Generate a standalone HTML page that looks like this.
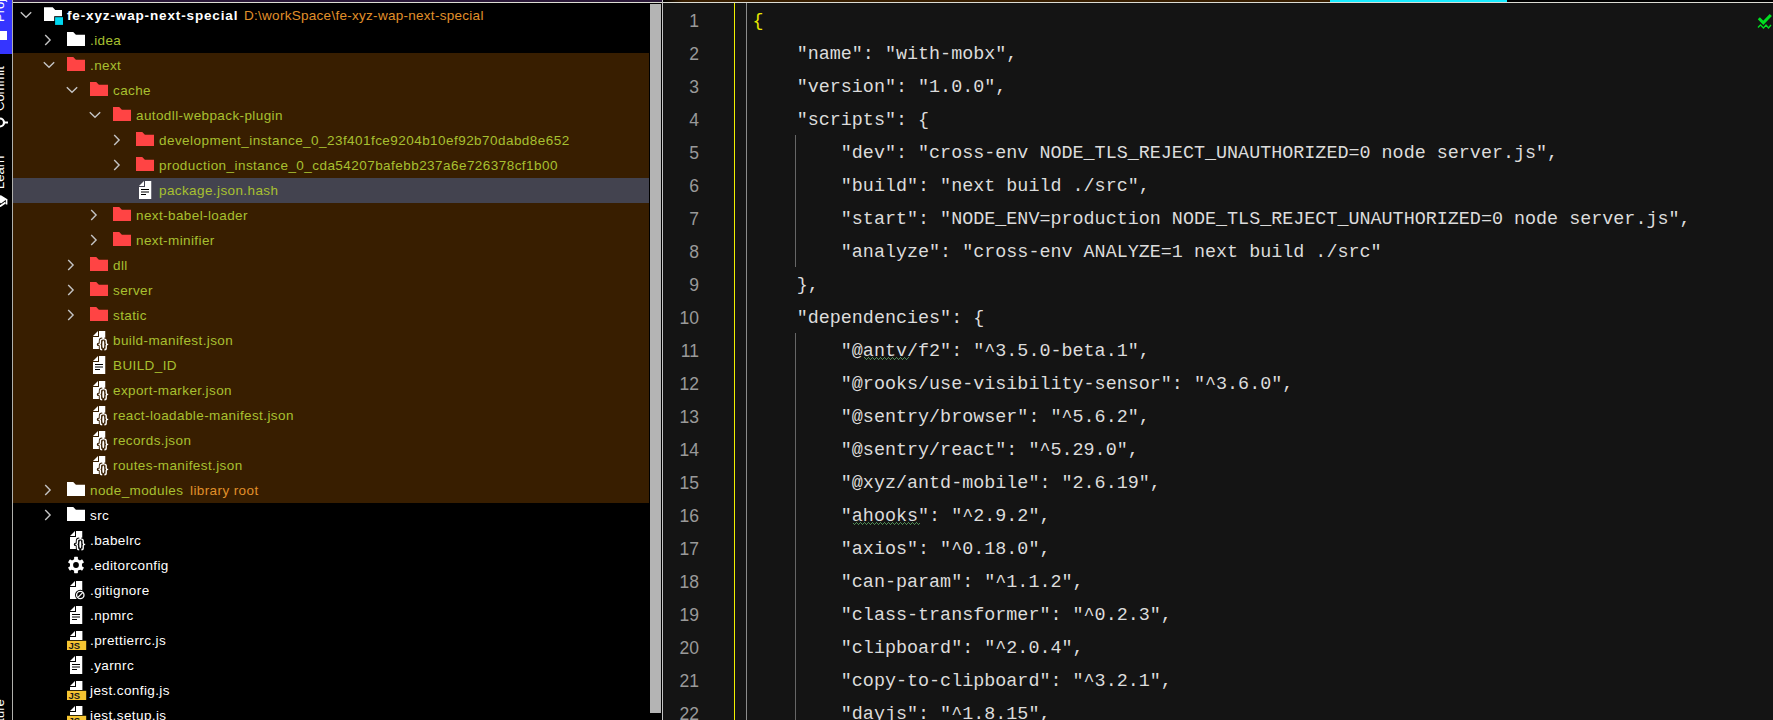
<!DOCTYPE html>
<html><head><meta charset="utf-8"><style>
*{margin:0;padding:0;box-sizing:border-box}
html,body{width:1773px;height:720px;overflow:hidden;background:#000}
body{position:relative;font-family:"Liberation Sans",sans-serif}
.abs{position:absolute}
.ic{position:absolute;display:block;overflow:visible}
.t{position:absolute;font-size:13.5px;line-height:25px;white-space:pre;letter-spacing:0.4px}
.b{font-weight:bold;letter-spacing:0.86px}
.ln{position:absolute;right:1074px;font-family:"Liberation Sans",sans-serif;font-size:17.5px;line-height:32px;color:#9a9a9a;white-space:pre}
.cl{position:absolute;left:752.5px;font-family:"Liberation Mono",monospace;font-size:18.4px;line-height:33px;color:#dcdcdc;white-space:pre}
.vt{position:absolute;font-size:13px;line-height:13px;color:#fff;white-space:pre;transform-origin:0 0;transform:rotate(-90deg)}
</style></head><body>

<div class="abs" style="left:0;top:0;width:12px;height:54px;background:#3535ff"></div>
<div class="vt" style="left:-7.5px;top:22px">Project</div>
<svg class="ic" style="left:0;top:30px" width="12" height="12"><rect x="-4" y="1" width="11" height="9" fill="#fff"/></svg>
<div class="vt" style="left:-7.5px;top:111px">Commit</div>
<svg class="ic" style="left:0;top:114px" width="12" height="16"><circle cx="0" cy="8.5" r="4" fill="none" stroke="#fff" stroke-width="2.2"/><path d="M4 8.5H8" stroke="#fff" stroke-width="2"/></svg>
<div class="vt" style="left:-7.5px;top:189px">Learn</div>
<svg class="ic" style="left:0;top:194px" width="12" height="14"><path d="M-5 5.5L0.5 1L7 5L1 9.5Z" fill="#fff"/><path d="M-4 10.5L0.5 12L5.5 8.5" fill="none" stroke="#fff" stroke-width="1.8"/><path d="M6.6 5V10.5" stroke="#fff" stroke-width="1.6"/></svg>
<div class="vt" style="left:-7.5px;top:752px">Structure</div>

<div class="abs" style="left:12px;top:0;width:1px;height:720px;background:#b0b0ac"></div>
<div class="abs" style="left:13px;top:0;width:649px;height:2px;background:#2a1838"></div>
<div class="abs" style="left:663px;top:0;width:1110px;height:2px;background:linear-gradient(90deg,#000 0px,#381e00 20px,#381e00 667px,#18ecff 667px,#18ecff 844px,#000 844px)"></div>
<div class="abs" style="left:13px;top:2px;width:1760px;height:1px;background:#dcdcd4"></div>
<div class="abs" style="left:13px;top:53px;width:636px;height:450px;background:#381e00"></div>
<div class="abs" style="left:13px;top:178px;width:636px;height:25px;background:#43434f"></div>
<svg class="ic" style="left:19.8px;top:11px" width="12" height="8" viewBox="0 0 12 8"><path d="M0.8 1.2 L6 6.2 L11.2 1.2" fill="none" stroke="#c4c4c4" stroke-width="1.4"/></svg><svg class="ic" style="left:44px;top:7px" width="20" height="18" viewBox="0 0 20 18"><path d="M0 0.3H8.7L11.2 3H18V14H0Z" fill="#fff"/><rect x="10.2" y="9.2" width="9.6" height="8.8" fill="#000"/><rect x="11.1" y="10.2" width="7.9" height="7.7" fill="#00d8f0"/></svg><span class="t b" style="left:67px;top:3px;color:#fff">fe-xyz-wap-next-special</span><span class="t" style="left:244px;top:3px;color:#e0902a;letter-spacing:0.28px">D:\workSpace\fe-xyz-wap-next-special</span><svg class="ic" style="left:44.099999999999994px;top:34px" width="8" height="12" viewBox="0 0 8 12"><path d="M1.2 1.1 L6.1 6 L1.2 10.9" fill="none" stroke="#c4c4c4" stroke-width="1.4"/></svg><svg class="ic" style="left:67px;top:32px" width="18" height="14" viewBox="0 0 18 14"><path d="M0 0H6.2L8.9 2.7H18V14H0Z" fill="#ffffff"/></svg><span class="t" style="left:90px;top:28px;color:#a8c030">.idea</span><svg class="ic" style="left:42.8px;top:61px" width="12" height="8" viewBox="0 0 12 8"><path d="M0.8 1.2 L6 6.2 L11.2 1.2" fill="none" stroke="#c4c4c4" stroke-width="1.4"/></svg><svg class="ic" style="left:67px;top:57px" width="18" height="14" viewBox="0 0 18 14"><path d="M0 0H6.2L8.9 2.7H18V14H0Z" fill="#ff4444"/></svg><span class="t" style="left:90px;top:53px;color:#a8c030">.next</span><svg class="ic" style="left:65.8px;top:86px" width="12" height="8" viewBox="0 0 12 8"><path d="M0.8 1.2 L6 6.2 L11.2 1.2" fill="none" stroke="#c4c4c4" stroke-width="1.4"/></svg><svg class="ic" style="left:90px;top:82px" width="18" height="14" viewBox="0 0 18 14"><path d="M0 0H6.2L8.9 2.7H18V14H0Z" fill="#ff4444"/></svg><span class="t" style="left:113px;top:78px;color:#a8c030">cache</span><svg class="ic" style="left:88.8px;top:111px" width="12" height="8" viewBox="0 0 12 8"><path d="M0.8 1.2 L6 6.2 L11.2 1.2" fill="none" stroke="#c4c4c4" stroke-width="1.4"/></svg><svg class="ic" style="left:113px;top:107px" width="18" height="14" viewBox="0 0 18 14"><path d="M0 0H6.2L8.9 2.7H18V14H0Z" fill="#ff4444"/></svg><span class="t" style="left:136px;top:103px;color:#a8c030">autodll-webpack-plugin</span><svg class="ic" style="left:113.1px;top:134px" width="8" height="12" viewBox="0 0 8 12"><path d="M1.2 1.1 L6.1 6 L1.2 10.9" fill="none" stroke="#c4c4c4" stroke-width="1.4"/></svg><svg class="ic" style="left:136px;top:132px" width="18" height="14" viewBox="0 0 18 14"><path d="M0 0H6.2L8.9 2.7H18V14H0Z" fill="#ff4444"/></svg><span class="t" style="left:159px;top:128px;color:#a8c030;letter-spacing:0.45px">development_instance_0_23f401fce9204b10ef92b70dabd8e652</span><svg class="ic" style="left:113.1px;top:159px" width="8" height="12" viewBox="0 0 8 12"><path d="M1.2 1.1 L6.1 6 L1.2 10.9" fill="none" stroke="#c4c4c4" stroke-width="1.4"/></svg><svg class="ic" style="left:136px;top:157px" width="18" height="14" viewBox="0 0 18 14"><path d="M0 0H6.2L8.9 2.7H18V14H0Z" fill="#ff4444"/></svg><span class="t" style="left:159px;top:153px;color:#a8c030;letter-spacing:0.45px">production_instance_0_cda54207bafebb237a6e726378cf1b00</span><svg class="ic" style="left:136px;top:178px" width="24" height="25" viewBox="0 0 24 25"><path d="M3 8L8 3V8Z" fill="#fff"/><path d="M9 3H15.25V21H3V9H9Z" fill="#fff"/><rect x="5" y="11" width="8" height="1" fill="#000"/><rect x="5" y="13.5" width="8" height="1" fill="#000"/><rect x="5" y="16" width="5" height="1" fill="#000"/></svg><span class="t" style="left:159px;top:178px;color:#a8c030">package.json.hash</span><svg class="ic" style="left:90.1px;top:209px" width="8" height="12" viewBox="0 0 8 12"><path d="M1.2 1.1 L6.1 6 L1.2 10.9" fill="none" stroke="#c4c4c4" stroke-width="1.4"/></svg><svg class="ic" style="left:113px;top:207px" width="18" height="14" viewBox="0 0 18 14"><path d="M0 0H6.2L8.9 2.7H18V14H0Z" fill="#ff4444"/></svg><span class="t" style="left:136px;top:203px;color:#a8c030">next-babel-loader</span><svg class="ic" style="left:90.1px;top:234px" width="8" height="12" viewBox="0 0 8 12"><path d="M1.2 1.1 L6.1 6 L1.2 10.9" fill="none" stroke="#c4c4c4" stroke-width="1.4"/></svg><svg class="ic" style="left:113px;top:232px" width="18" height="14" viewBox="0 0 18 14"><path d="M0 0H6.2L8.9 2.7H18V14H0Z" fill="#ff4444"/></svg><span class="t" style="left:136px;top:228px;color:#a8c030">next-minifier</span><svg class="ic" style="left:67.1px;top:259px" width="8" height="12" viewBox="0 0 8 12"><path d="M1.2 1.1 L6.1 6 L1.2 10.9" fill="none" stroke="#c4c4c4" stroke-width="1.4"/></svg><svg class="ic" style="left:90px;top:257px" width="18" height="14" viewBox="0 0 18 14"><path d="M0 0H6.2L8.9 2.7H18V14H0Z" fill="#ff4444"/></svg><span class="t" style="left:113px;top:253px;color:#a8c030">dll</span><svg class="ic" style="left:67.1px;top:284px" width="8" height="12" viewBox="0 0 8 12"><path d="M1.2 1.1 L6.1 6 L1.2 10.9" fill="none" stroke="#c4c4c4" stroke-width="1.4"/></svg><svg class="ic" style="left:90px;top:282px" width="18" height="14" viewBox="0 0 18 14"><path d="M0 0H6.2L8.9 2.7H18V14H0Z" fill="#ff4444"/></svg><span class="t" style="left:113px;top:278px;color:#a8c030">server</span><svg class="ic" style="left:67.1px;top:309px" width="8" height="12" viewBox="0 0 8 12"><path d="M1.2 1.1 L6.1 6 L1.2 10.9" fill="none" stroke="#c4c4c4" stroke-width="1.4"/></svg><svg class="ic" style="left:90px;top:307px" width="18" height="14" viewBox="0 0 18 14"><path d="M0 0H6.2L8.9 2.7H18V14H0Z" fill="#ff4444"/></svg><span class="t" style="left:113px;top:303px;color:#a8c030">static</span><svg class="ic" style="left:90px;top:328px" width="24" height="25" viewBox="0 0 24 25"><path d="M3 8L8 3V8Z" fill="#fff"/><path d="M9 3H15.25V21H3V9H9Z" fill="#fff"/><g fill="none" stroke="#381e00" stroke-width="3.2" stroke-linejoin="round"><path d="M12.2 11.1Q10.4 11.1 10.4 12.9V15.2Q10.4 16.4 8.4 16.4Q10.4 16.4 10.4 17.6V20Q10.4 21.8 12.2 21.8"/><path d="M14.4 11.1Q16.2 11.1 16.2 12.9V15.2Q16.2 16.4 18.2 16.4Q16.2 16.4 16.2 17.6V20Q16.2 21.8 14.4 21.8"/></g><ellipse cx="13.3" cy="16.4" rx="2.1" ry="4.9" fill="#381e00"/><g fill="none" stroke="#fff" stroke-width="1.4"><path d="M12.2 11.1Q10.4 11.1 10.4 12.9V15.2Q10.4 16.4 8.4 16.4Q10.4 16.4 10.4 17.6V20Q10.4 21.8 12.2 21.8"/><path d="M14.4 11.1Q16.2 11.1 16.2 12.9V15.2Q16.2 16.4 18.2 16.4Q16.2 16.4 16.2 17.6V20Q16.2 21.8 14.4 21.8"/></g><ellipse cx="13.3" cy="16.4" rx="1.0" ry="3.8" fill="#fff"/></svg><span class="t" style="left:113px;top:328px;color:#a8c030">build-manifest.json</span><svg class="ic" style="left:90px;top:353px" width="24" height="25" viewBox="0 0 24 25"><path d="M3 8L8 3V8Z" fill="#fff"/><path d="M9 3H15.25V21H3V9H9Z" fill="#fff"/><rect x="5" y="11" width="8" height="1" fill="#000"/><rect x="5" y="13.5" width="8" height="1" fill="#000"/><rect x="5" y="16" width="5" height="1" fill="#000"/></svg><span class="t" style="left:113px;top:353px;color:#a8c030">BUILD_ID</span><svg class="ic" style="left:90px;top:378px" width="24" height="25" viewBox="0 0 24 25"><path d="M3 8L8 3V8Z" fill="#fff"/><path d="M9 3H15.25V21H3V9H9Z" fill="#fff"/><g fill="none" stroke="#381e00" stroke-width="3.2" stroke-linejoin="round"><path d="M12.2 11.1Q10.4 11.1 10.4 12.9V15.2Q10.4 16.4 8.4 16.4Q10.4 16.4 10.4 17.6V20Q10.4 21.8 12.2 21.8"/><path d="M14.4 11.1Q16.2 11.1 16.2 12.9V15.2Q16.2 16.4 18.2 16.4Q16.2 16.4 16.2 17.6V20Q16.2 21.8 14.4 21.8"/></g><ellipse cx="13.3" cy="16.4" rx="2.1" ry="4.9" fill="#381e00"/><g fill="none" stroke="#fff" stroke-width="1.4"><path d="M12.2 11.1Q10.4 11.1 10.4 12.9V15.2Q10.4 16.4 8.4 16.4Q10.4 16.4 10.4 17.6V20Q10.4 21.8 12.2 21.8"/><path d="M14.4 11.1Q16.2 11.1 16.2 12.9V15.2Q16.2 16.4 18.2 16.4Q16.2 16.4 16.2 17.6V20Q16.2 21.8 14.4 21.8"/></g><ellipse cx="13.3" cy="16.4" rx="1.0" ry="3.8" fill="#fff"/></svg><span class="t" style="left:113px;top:378px;color:#a8c030">export-marker.json</span><svg class="ic" style="left:90px;top:403px" width="24" height="25" viewBox="0 0 24 25"><path d="M3 8L8 3V8Z" fill="#fff"/><path d="M9 3H15.25V21H3V9H9Z" fill="#fff"/><g fill="none" stroke="#381e00" stroke-width="3.2" stroke-linejoin="round"><path d="M12.2 11.1Q10.4 11.1 10.4 12.9V15.2Q10.4 16.4 8.4 16.4Q10.4 16.4 10.4 17.6V20Q10.4 21.8 12.2 21.8"/><path d="M14.4 11.1Q16.2 11.1 16.2 12.9V15.2Q16.2 16.4 18.2 16.4Q16.2 16.4 16.2 17.6V20Q16.2 21.8 14.4 21.8"/></g><ellipse cx="13.3" cy="16.4" rx="2.1" ry="4.9" fill="#381e00"/><g fill="none" stroke="#fff" stroke-width="1.4"><path d="M12.2 11.1Q10.4 11.1 10.4 12.9V15.2Q10.4 16.4 8.4 16.4Q10.4 16.4 10.4 17.6V20Q10.4 21.8 12.2 21.8"/><path d="M14.4 11.1Q16.2 11.1 16.2 12.9V15.2Q16.2 16.4 18.2 16.4Q16.2 16.4 16.2 17.6V20Q16.2 21.8 14.4 21.8"/></g><ellipse cx="13.3" cy="16.4" rx="1.0" ry="3.8" fill="#fff"/></svg><span class="t" style="left:113px;top:403px;color:#a8c030">react-loadable-manifest.json</span><svg class="ic" style="left:90px;top:428px" width="24" height="25" viewBox="0 0 24 25"><path d="M3 8L8 3V8Z" fill="#fff"/><path d="M9 3H15.25V21H3V9H9Z" fill="#fff"/><g fill="none" stroke="#381e00" stroke-width="3.2" stroke-linejoin="round"><path d="M12.2 11.1Q10.4 11.1 10.4 12.9V15.2Q10.4 16.4 8.4 16.4Q10.4 16.4 10.4 17.6V20Q10.4 21.8 12.2 21.8"/><path d="M14.4 11.1Q16.2 11.1 16.2 12.9V15.2Q16.2 16.4 18.2 16.4Q16.2 16.4 16.2 17.6V20Q16.2 21.8 14.4 21.8"/></g><ellipse cx="13.3" cy="16.4" rx="2.1" ry="4.9" fill="#381e00"/><g fill="none" stroke="#fff" stroke-width="1.4"><path d="M12.2 11.1Q10.4 11.1 10.4 12.9V15.2Q10.4 16.4 8.4 16.4Q10.4 16.4 10.4 17.6V20Q10.4 21.8 12.2 21.8"/><path d="M14.4 11.1Q16.2 11.1 16.2 12.9V15.2Q16.2 16.4 18.2 16.4Q16.2 16.4 16.2 17.6V20Q16.2 21.8 14.4 21.8"/></g><ellipse cx="13.3" cy="16.4" rx="1.0" ry="3.8" fill="#fff"/></svg><span class="t" style="left:113px;top:428px;color:#a8c030">records.json</span><svg class="ic" style="left:90px;top:453px" width="24" height="25" viewBox="0 0 24 25"><path d="M3 8L8 3V8Z" fill="#fff"/><path d="M9 3H15.25V21H3V9H9Z" fill="#fff"/><g fill="none" stroke="#381e00" stroke-width="3.2" stroke-linejoin="round"><path d="M12.2 11.1Q10.4 11.1 10.4 12.9V15.2Q10.4 16.4 8.4 16.4Q10.4 16.4 10.4 17.6V20Q10.4 21.8 12.2 21.8"/><path d="M14.4 11.1Q16.2 11.1 16.2 12.9V15.2Q16.2 16.4 18.2 16.4Q16.2 16.4 16.2 17.6V20Q16.2 21.8 14.4 21.8"/></g><ellipse cx="13.3" cy="16.4" rx="2.1" ry="4.9" fill="#381e00"/><g fill="none" stroke="#fff" stroke-width="1.4"><path d="M12.2 11.1Q10.4 11.1 10.4 12.9V15.2Q10.4 16.4 8.4 16.4Q10.4 16.4 10.4 17.6V20Q10.4 21.8 12.2 21.8"/><path d="M14.4 11.1Q16.2 11.1 16.2 12.9V15.2Q16.2 16.4 18.2 16.4Q16.2 16.4 16.2 17.6V20Q16.2 21.8 14.4 21.8"/></g><ellipse cx="13.3" cy="16.4" rx="1.0" ry="3.8" fill="#fff"/></svg><span class="t" style="left:113px;top:453px;color:#a8c030">routes-manifest.json</span><svg class="ic" style="left:44.099999999999994px;top:484px" width="8" height="12" viewBox="0 0 8 12"><path d="M1.2 1.1 L6.1 6 L1.2 10.9" fill="none" stroke="#c4c4c4" stroke-width="1.4"/></svg><svg class="ic" style="left:67px;top:482px" width="18" height="14" viewBox="0 0 18 14"><path d="M0 0H6.2L8.9 2.7H18V14H0Z" fill="#ffffff"/></svg><span class="t" style="left:90px;top:478px;color:#a8c030">node_modules</span><span class="t" style="left:190px;top:478px;color:#e0902a">library root</span><svg class="ic" style="left:44.099999999999994px;top:509px" width="8" height="12" viewBox="0 0 8 12"><path d="M1.2 1.1 L6.1 6 L1.2 10.9" fill="none" stroke="#c4c4c4" stroke-width="1.4"/></svg><svg class="ic" style="left:67px;top:507px" width="18" height="14" viewBox="0 0 18 14"><path d="M0 0H6.2L8.9 2.7H18V14H0Z" fill="#ffffff"/></svg><span class="t" style="left:90px;top:503px;color:#ffffff">src</span><svg class="ic" style="left:67px;top:528px" width="24" height="25" viewBox="0 0 24 25"><path d="M3 8L8 3V8Z" fill="#fff"/><path d="M9 3H15.25V21H3V9H9Z" fill="#fff"/><g fill="none" stroke="#000" stroke-width="3.2" stroke-linejoin="round"><path d="M12.2 11.1Q10.4 11.1 10.4 12.9V15.2Q10.4 16.4 8.4 16.4Q10.4 16.4 10.4 17.6V20Q10.4 21.8 12.2 21.8"/><path d="M14.4 11.1Q16.2 11.1 16.2 12.9V15.2Q16.2 16.4 18.2 16.4Q16.2 16.4 16.2 17.6V20Q16.2 21.8 14.4 21.8"/></g><ellipse cx="13.3" cy="16.4" rx="2.1" ry="4.9" fill="#000"/><g fill="none" stroke="#fff" stroke-width="1.4"><path d="M12.2 11.1Q10.4 11.1 10.4 12.9V15.2Q10.4 16.4 8.4 16.4Q10.4 16.4 10.4 17.6V20Q10.4 21.8 12.2 21.8"/><path d="M14.4 11.1Q16.2 11.1 16.2 12.9V15.2Q16.2 16.4 18.2 16.4Q16.2 16.4 16.2 17.6V20Q16.2 21.8 14.4 21.8"/></g><ellipse cx="13.3" cy="16.4" rx="1.0" ry="3.8" fill="#fff"/></svg><span class="t" style="left:90px;top:528px;color:#ffffff">.babelrc</span><svg class="ic" style="left:67px;top:553px" width="24" height="25" viewBox="0 0 24 25"><g transform="translate(9 12)" fill="#fff"><rect x="-1.9" y="-8.2" width="3.8" height="4" rx="0.6" transform="rotate(0)"/><rect x="-1.9" y="-8.2" width="3.8" height="4" rx="0.6" transform="rotate(60)"/><rect x="-1.9" y="-8.2" width="3.8" height="4" rx="0.6" transform="rotate(120)"/><rect x="-1.9" y="-8.2" width="3.8" height="4" rx="0.6" transform="rotate(180)"/><rect x="-1.9" y="-8.2" width="3.8" height="4" rx="0.6" transform="rotate(240)"/><rect x="-1.9" y="-8.2" width="3.8" height="4" rx="0.6" transform="rotate(300)"/><circle r="6.1"/></g><circle cx="9" cy="12" r="2.9" fill="#000"/></svg><span class="t" style="left:90px;top:553px;color:#ffffff">.editorconfig</span><svg class="ic" style="left:67px;top:578px" width="24" height="25" viewBox="0 0 24 25"><path d="M3 8L8 3V8Z" fill="#fff"/><path d="M9 3H15.25V21H3V9H9Z" fill="#fff"/><circle cx="13.3" cy="17" r="5.3" fill="#000"/><circle cx="13.3" cy="17" r="3.7" fill="none" stroke="#fff" stroke-width="1.3"/><path d="M10.9 19.4L15.7 14.6" stroke="#fff" stroke-width="1.3"/></svg><span class="t" style="left:90px;top:578px;color:#ffffff">.gitignore</span><svg class="ic" style="left:67px;top:603px" width="24" height="25" viewBox="0 0 24 25"><path d="M3 8L8 3V8Z" fill="#fff"/><path d="M9 3H15.25V21H3V9H9Z" fill="#fff"/><rect x="5" y="11" width="8" height="1" fill="#000"/><rect x="5" y="13.5" width="8" height="1" fill="#000"/><rect x="5" y="16" width="5" height="1" fill="#000"/></svg><span class="t" style="left:90px;top:603px;color:#ffffff">.npmrc</span><svg class="ic" style="left:67px;top:628px" width="24" height="25" viewBox="0 0 24 25"><path d="M3 8L8 3V8Z" fill="#fff"/><path d="M9 3H15.4V12H3V9H9Z" fill="#fff"/><rect x="0" y="12.8" width="19.2" height="9.2" fill="#f5c431"/><text x="1.5" y="21" font-family="Liberation Sans" font-size="9.5" font-weight="bold" fill="#1a1a1a">JS</text></svg><span class="t" style="left:90px;top:628px;color:#ffffff">.prettierrc.js</span><svg class="ic" style="left:67px;top:653px" width="24" height="25" viewBox="0 0 24 25"><path d="M3 8L8 3V8Z" fill="#fff"/><path d="M9 3H15.25V21H3V9H9Z" fill="#fff"/><rect x="5" y="11" width="8" height="1" fill="#000"/><rect x="5" y="13.5" width="8" height="1" fill="#000"/><rect x="5" y="16" width="5" height="1" fill="#000"/></svg><span class="t" style="left:90px;top:653px;color:#ffffff">.yarnrc</span><svg class="ic" style="left:67px;top:678px" width="24" height="25" viewBox="0 0 24 25"><path d="M3 8L8 3V8Z" fill="#fff"/><path d="M9 3H15.4V12H3V9H9Z" fill="#fff"/><rect x="0" y="12.8" width="19.2" height="9.2" fill="#f5c431"/><text x="1.5" y="21" font-family="Liberation Sans" font-size="9.5" font-weight="bold" fill="#1a1a1a">JS</text></svg><span class="t" style="left:90px;top:678px;color:#ffffff">jest.config.js</span><svg class="ic" style="left:67px;top:703px" width="24" height="25" viewBox="0 0 24 25"><path d="M3 8L8 3V8Z" fill="#fff"/><path d="M9 3H15.4V12H3V9H9Z" fill="#fff"/><rect x="0" y="12.8" width="19.2" height="9.2" fill="#f5c431"/><text x="1.5" y="21" font-family="Liberation Sans" font-size="9.5" font-weight="bold" fill="#1a1a1a">JS</text></svg><span class="t" style="left:90px;top:703px;color:#ffffff">jest.setup.js</span>
<div class="abs" style="left:650px;top:4px;width:11px;height:709px;background:#b4b4b4"></div>
<div class="abs" style="left:662px;top:0;width:1px;height:720px;background:#c4c4c4"></div>
<div class="abs" style="left:663px;top:3px;width:1110px;height:717px;background:#141414"></div>
<div class="abs" style="left:734px;top:3px;width:1px;height:717px;background:#f0f000"></div>
<div class="abs" style="left:746px;top:3px;width:1px;height:717px;background:#8c8c8c"></div>
<div class="abs" style="left:795px;top:135px;width:1px;height:132px;background:#666"></div>
<div class="abs" style="left:795px;top:333px;width:1px;height:387px;background:#666"></div>
<div class="ln" style="top:5px">1</div><div class="cl" style="top:5px;color:#e8e800">{</div><div class="ln" style="top:38px">2</div><div class="cl" style="top:38px">    &quot;name&quot;: &quot;with-mobx&quot;,</div><div class="ln" style="top:71px">3</div><div class="cl" style="top:71px">    &quot;version&quot;: &quot;1.0.0&quot;,</div><div class="ln" style="top:104px">4</div><div class="cl" style="top:104px">    &quot;scripts&quot;: {</div><div class="ln" style="top:137px">5</div><div class="cl" style="top:137px">        &quot;dev&quot;: &quot;cross-env NODE_TLS_REJECT_UNAUTHORIZED=0 node server.js&quot;,</div><div class="ln" style="top:170px">6</div><div class="cl" style="top:170px">        &quot;build&quot;: &quot;next build ./src&quot;,</div><div class="ln" style="top:203px">7</div><div class="cl" style="top:203px">        &quot;start&quot;: &quot;NODE_ENV=production NODE_TLS_REJECT_UNAUTHORIZED=0 node server.js&quot;,</div><div class="ln" style="top:236px">8</div><div class="cl" style="top:236px">        &quot;analyze&quot;: &quot;cross-env ANALYZE=1 next build ./src&quot;</div><div class="ln" style="top:269px">9</div><div class="cl" style="top:269px">    },</div><div class="ln" style="top:302px">10</div><div class="cl" style="top:302px">    &quot;dependencies&quot;: {</div><div class="ln" style="top:335px">11</div><div class="cl" style="top:335px">        &quot;@antv/f2&quot;: &quot;^3.5.0-beta.1&quot;,</div><div class="ln" style="top:368px">12</div><div class="cl" style="top:368px">        &quot;@rooks/use-visibility-sensor&quot;: &quot;^3.6.0&quot;,</div><div class="ln" style="top:401px">13</div><div class="cl" style="top:401px">        &quot;@sentry/browser&quot;: &quot;^5.6.2&quot;,</div><div class="ln" style="top:434px">14</div><div class="cl" style="top:434px">        &quot;@sentry/react&quot;: &quot;^5.29.0&quot;,</div><div class="ln" style="top:467px">15</div><div class="cl" style="top:467px">        &quot;@xyz/antd-mobile&quot;: &quot;2.6.19&quot;,</div><div class="ln" style="top:500px">16</div><div class="cl" style="top:500px">        &quot;ahooks&quot;: &quot;^2.9.2&quot;,</div><div class="ln" style="top:533px">17</div><div class="cl" style="top:533px">        &quot;axios&quot;: &quot;^0.18.0&quot;,</div><div class="ln" style="top:566px">18</div><div class="cl" style="top:566px">        &quot;can-param&quot;: &quot;^1.1.2&quot;,</div><div class="ln" style="top:599px">19</div><div class="cl" style="top:599px">        &quot;class-transformer&quot;: &quot;^0.2.3&quot;,</div><div class="ln" style="top:632px">20</div><div class="cl" style="top:632px">        &quot;clipboard&quot;: &quot;^2.0.4&quot;,</div><div class="ln" style="top:665px">21</div><div class="cl" style="top:665px">        &quot;copy-to-clipboard&quot;: &quot;^3.2.1&quot;,</div><div class="ln" style="top:698px">22</div><div class="cl" style="top:698px">        &quot;dayjs&quot;: &quot;^1.8.15&quot;,</div><svg class="ic" style="left:864px;top:357px" width="45" height="3" fill="#4f8a55"><rect x="0" y="0" width="1" height="1"/><rect x="1" y="1" width="1" height="1"/><rect x="2" y="2" width="1" height="1"/><rect x="3" y="1" width="1" height="1"/><rect x="4" y="0" width="1" height="1"/><rect x="5" y="1" width="1" height="1"/><rect x="6" y="2" width="1" height="1"/><rect x="7" y="1" width="1" height="1"/><rect x="8" y="0" width="1" height="1"/><rect x="9" y="1" width="1" height="1"/><rect x="10" y="2" width="1" height="1"/><rect x="11" y="1" width="1" height="1"/><rect x="12" y="0" width="1" height="1"/><rect x="13" y="1" width="1" height="1"/><rect x="14" y="2" width="1" height="1"/><rect x="15" y="1" width="1" height="1"/><rect x="16" y="0" width="1" height="1"/><rect x="17" y="1" width="1" height="1"/><rect x="18" y="2" width="1" height="1"/><rect x="19" y="1" width="1" height="1"/><rect x="20" y="0" width="1" height="1"/><rect x="21" y="1" width="1" height="1"/><rect x="22" y="2" width="1" height="1"/><rect x="23" y="1" width="1" height="1"/><rect x="24" y="0" width="1" height="1"/><rect x="25" y="1" width="1" height="1"/><rect x="26" y="2" width="1" height="1"/><rect x="27" y="1" width="1" height="1"/><rect x="28" y="0" width="1" height="1"/><rect x="29" y="1" width="1" height="1"/><rect x="30" y="2" width="1" height="1"/><rect x="31" y="1" width="1" height="1"/><rect x="32" y="0" width="1" height="1"/><rect x="33" y="1" width="1" height="1"/><rect x="34" y="2" width="1" height="1"/><rect x="35" y="1" width="1" height="1"/><rect x="36" y="0" width="1" height="1"/><rect x="37" y="1" width="1" height="1"/><rect x="38" y="2" width="1" height="1"/><rect x="39" y="1" width="1" height="1"/><rect x="40" y="0" width="1" height="1"/><rect x="41" y="1" width="1" height="1"/><rect x="42" y="2" width="1" height="1"/><rect x="43" y="1" width="1" height="1"/><rect x="44" y="0" width="1" height="1"/></svg><svg class="ic" style="left:853px;top:522px" width="67" height="3" fill="#4f8a55"><rect x="0" y="1" width="1" height="1"/><rect x="1" y="2" width="1" height="1"/><rect x="2" y="1" width="1" height="1"/><rect x="3" y="0" width="1" height="1"/><rect x="4" y="1" width="1" height="1"/><rect x="5" y="2" width="1" height="1"/><rect x="6" y="1" width="1" height="1"/><rect x="7" y="0" width="1" height="1"/><rect x="8" y="1" width="1" height="1"/><rect x="9" y="2" width="1" height="1"/><rect x="10" y="1" width="1" height="1"/><rect x="11" y="0" width="1" height="1"/><rect x="12" y="1" width="1" height="1"/><rect x="13" y="2" width="1" height="1"/><rect x="14" y="1" width="1" height="1"/><rect x="15" y="0" width="1" height="1"/><rect x="16" y="1" width="1" height="1"/><rect x="17" y="2" width="1" height="1"/><rect x="18" y="1" width="1" height="1"/><rect x="19" y="0" width="1" height="1"/><rect x="20" y="1" width="1" height="1"/><rect x="21" y="2" width="1" height="1"/><rect x="22" y="1" width="1" height="1"/><rect x="23" y="0" width="1" height="1"/><rect x="24" y="1" width="1" height="1"/><rect x="25" y="2" width="1" height="1"/><rect x="26" y="1" width="1" height="1"/><rect x="27" y="0" width="1" height="1"/><rect x="28" y="1" width="1" height="1"/><rect x="29" y="2" width="1" height="1"/><rect x="30" y="1" width="1" height="1"/><rect x="31" y="0" width="1" height="1"/><rect x="32" y="1" width="1" height="1"/><rect x="33" y="2" width="1" height="1"/><rect x="34" y="1" width="1" height="1"/><rect x="35" y="0" width="1" height="1"/><rect x="36" y="1" width="1" height="1"/><rect x="37" y="2" width="1" height="1"/><rect x="38" y="1" width="1" height="1"/><rect x="39" y="0" width="1" height="1"/><rect x="40" y="1" width="1" height="1"/><rect x="41" y="2" width="1" height="1"/><rect x="42" y="1" width="1" height="1"/><rect x="43" y="0" width="1" height="1"/><rect x="44" y="1" width="1" height="1"/><rect x="45" y="2" width="1" height="1"/><rect x="46" y="1" width="1" height="1"/><rect x="47" y="0" width="1" height="1"/><rect x="48" y="1" width="1" height="1"/><rect x="49" y="2" width="1" height="1"/><rect x="50" y="1" width="1" height="1"/><rect x="51" y="0" width="1" height="1"/><rect x="52" y="1" width="1" height="1"/><rect x="53" y="2" width="1" height="1"/><rect x="54" y="1" width="1" height="1"/><rect x="55" y="0" width="1" height="1"/><rect x="56" y="1" width="1" height="1"/><rect x="57" y="2" width="1" height="1"/><rect x="58" y="1" width="1" height="1"/><rect x="59" y="0" width="1" height="1"/><rect x="60" y="1" width="1" height="1"/><rect x="61" y="2" width="1" height="1"/><rect x="62" y="1" width="1" height="1"/><rect x="63" y="0" width="1" height="1"/><rect x="64" y="1" width="1" height="1"/><rect x="65" y="2" width="1" height="1"/><rect x="66" y="1" width="1" height="1"/></svg>
<svg class="ic" style="left:1755px;top:12px" width="18" height="18" viewBox="0 0 18 18"><path d="M3.8 6.3L8.3 10.8L15.8 3" fill="none" stroke="#00e020" stroke-width="3"/><path d="M3 15.5L5.5 13L8.5 16L11 13L13.5 16L16 13" fill="none" stroke="#00e020" stroke-width="1.3"/></svg>
</body></html>
